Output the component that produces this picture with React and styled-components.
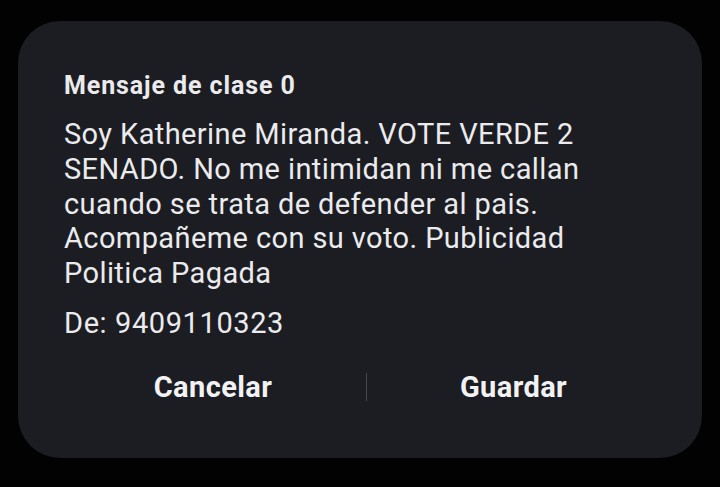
import React from "react";
import styled, { createGlobalStyle } from "styled-components";

const Global = createGlobalStyle`
  html, body {
    margin: 0;
    padding: 0;
    background: #020202;
  }
  body {
    font-family: Roboto, "Noto Sans", "Liberation Sans", sans-serif;
    -webkit-font-smoothing: antialiased;
  }
`;

const Screen = styled.div`
  width: 720px;
  height: 487px;
  box-sizing: border-box;
  padding: 21px 18px 0 18px;
  background: #020202;
  overflow: hidden;
`;

const Dialog = styled.div`
  height: 437px;
  box-sizing: border-box;
  background: #1c1d22;
  border-radius: 42px;
  padding: 50px 36px 0 46px;
  display: flex;
  flex-direction: column;
  color: #ebebed;
`;

const Title = styled.h2`
  margin: 0;
  font-size: 25px;
  letter-spacing: 0.9px;
  font-weight: 700;
  line-height: 30px;
`;

const Body = styled.p`
  margin: 16px 0 0 0;
  font-size: 29px;
  letter-spacing: 0.4px;
  line-height: 34.75px;
  font-weight: 400;
`;

const Sender = styled.p`
  margin: 15px 0 0 0;
  font-size: 29px;
  letter-spacing: 0.6px;
  line-height: 34px;
`;

const Actions = styled.div`
  display: grid;
  grid-template-columns: 306px 1px 293px;
  align-items: center;
  margin: 27px 0 0 -4px;
`;

const Action = styled.button`
  background: none;
  border: none;
  color: #f2f2f4;
  font-family: inherit;
  font-size: 29px;
  letter-spacing: 0.4px;
  font-weight: 700;
  height: 40px;
  padding: 0;
  cursor: pointer;
`;

const Divider = styled.span`
  width: 1px;
  height: 28px;
  background: #46474c;
`;

export default function App() {
  return (
    <Screen>
      <Global />
      <Dialog>
        <Title>Mensaje de clase 0</Title>
        <Body>
          Soy Katherine Miranda. VOTE VERDE 2<br />
          SENADO. No me intimidan ni me callan<br />
          cuando se trata de defender al pais.<br />
          Acompañeme con su voto. Publicidad<br />
          Politica Pagada
        </Body>
        <Sender>De: 9409110323</Sender>
        <Actions>
          <Action>Cancelar</Action>
          <Divider />
          <Action>Guardar</Action>
        </Actions>
      </Dialog>
    </Screen>
  );
}
